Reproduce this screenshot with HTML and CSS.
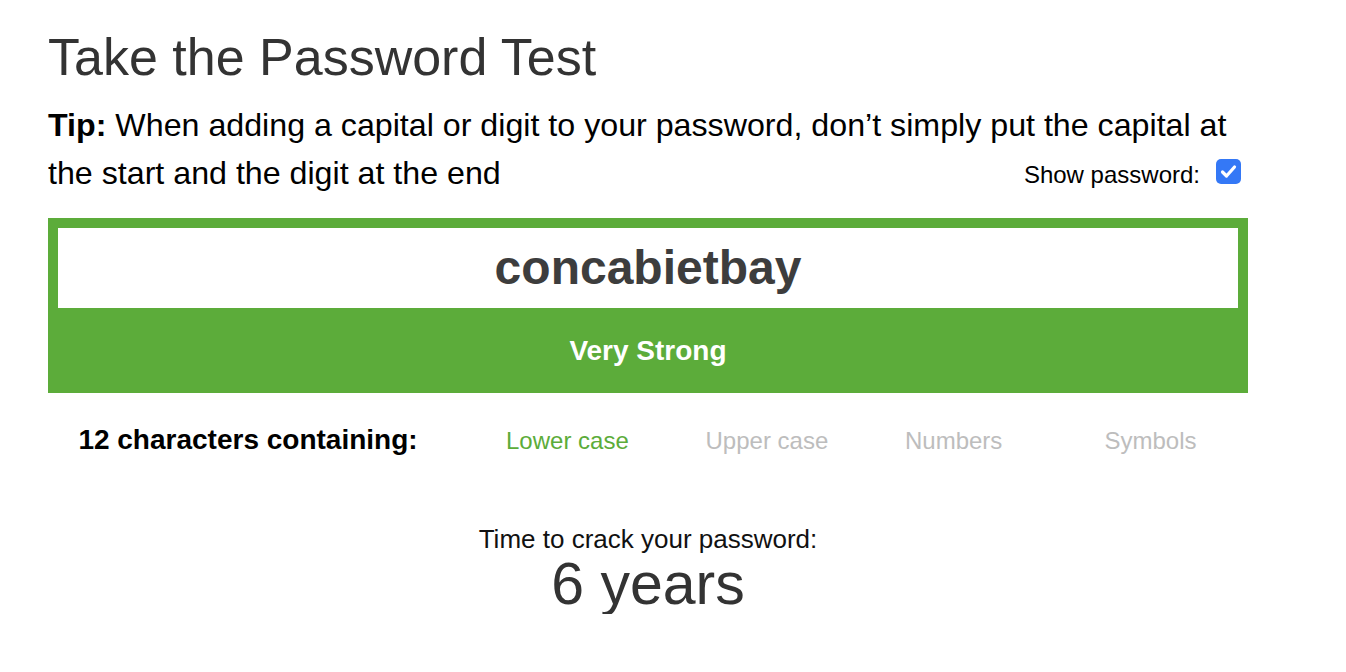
FILE: index.html
```html
<!DOCTYPE html>
<html lang="en">
<head>
<meta charset="utf-8">
<title>Take the Password Test</title>
<link rel="stylesheet" href="styles.css">
</head>
<body>
<main class="page">
  <h1 class="title">Take the Password Test</h1>
  <div class="tip">
    <p class="tip-line"><strong>Tip:</strong> When adding a capital or digit to your password, don’t simply put the capital at</p>
    <div class="tip-row">
      <p class="tip-line">the start and the digit at the end</p>
      <label class="show"><span class="show-text">Show password:</span><span class="check"><svg width="25" height="25" viewBox="0 0 25 25"><path d="M6.5 13 L10.5 17 L18.5 8" fill="none" stroke="#fff" stroke-width="3.2" stroke-linecap="round" stroke-linejoin="round"/></svg></span></label>
    </div>
  </div>
  <section class="meter">
    <div class="field">concabietbay</div>
    <div class="strength">Very Strong</div>
  </section>
  <div class="reqs">
    <div class="reqs-label">12 characters containing:</div>
    <div class="req on">Lower case</div>
    <div class="req">Upper case</div>
    <div class="req">Numbers</div>
    <div class="req">Symbols</div>
  </div>
  <div class="crack">
    <div class="crack-label">Time to crack your password:</div>
    <div class="crack-time">6 years</div>
  </div>
</main>
</body>
</html>
```
FILE: styles.css
```css
html, body {
  margin: 0;
  padding: 0;
  background: #fff;
}
body {
  font-family: "Liberation Sans", Arial, Helvetica, sans-serif;
  color: #000;
}
.page {
  width: 1200px;
  margin-left: 48px;
}
.title {
  margin: 27px 0 0;
  font-size: 52px;
  line-height: 60px;
  font-weight: normal;
  color: #333;
}
.tip {
  margin-top: 15px;
  font-size: 32.2px;
  line-height: 47px;
}
.tip-line {
  margin: 0;
  white-space: nowrap;
}
.tip-line strong {
  font-weight: bold;
}
.tip-row {
  display: flex;
  justify-content: space-between;
  align-items: center;
}
.show {
  display: flex;
  align-items: center;
  height: 47px;
  margin-right: 7px;
  padding-top: 2px;
}
.show-text {
  font-size: 24px;
  line-height: 47px;
}
.check {
  display: block;
  width: 25px;
  height: 25px;
  margin-left: 16px;
  margin-top: -6px;
  border-radius: 5px;
  background: #3478f6;
}
.check svg {
  display: block;
}
.meter {
  margin-top: 20px;
  border: 10px solid #5cac3a;
  background: #5cac3a;
}
.field {
  height: 80px;
  line-height: 80px;
  background: #fff;
  text-align: center;
  font-size: 48px;
  font-weight: bold;
  color: #3d3d3d;
}
.strength {
  height: 65px;
  padding-top: 10px;
  line-height: 65px;
  text-align: center;
  font-size: 28px;
  font-weight: bold;
  color: #fff;
}
.reqs {
  display: flex;
  align-items: baseline;
  margin-top: 17px;
  height: 60px;
  line-height: 60px;
}
.reqs-label {
  width: 400px;
  text-align: center;
  font-size: 28px;
  font-weight: bold;
}
.req {
  width: 199.5px;
  box-sizing: border-box;
  padding-left: 58px;
  font-size: 24px;
  color: #bdbdbd;
}
.req.on {
  color: #5cac3a;
}
.crack {
  margin-top: 54px;
  text-align: center;
}
.crack-label {
  font-size: 26px;
  line-height: 30px;
  color: #111;
}
.crack-time {
  font-size: 59px;
  line-height: 60px;
  color: #333;
}
```
